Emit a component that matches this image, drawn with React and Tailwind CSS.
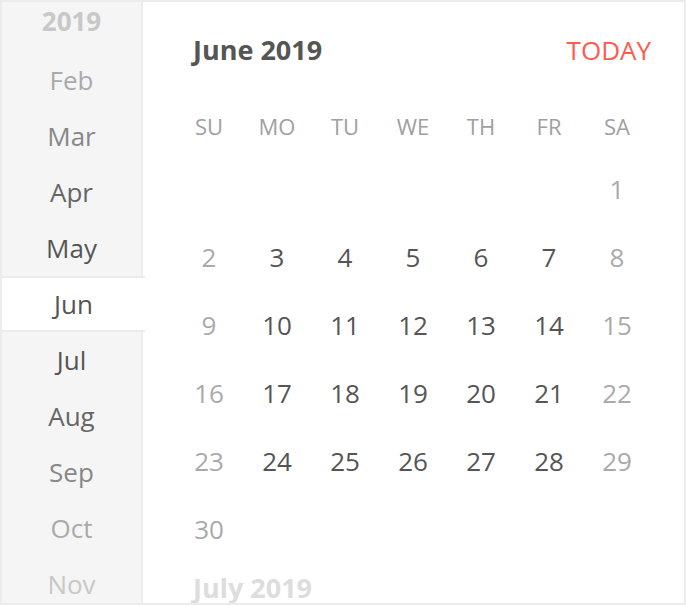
/* 월 선택 목록 + 월간 달력 (June 2019) */
const FONT = { fontFamily: '"Open Sans", "Noto Sans", sans-serif' };

const MONTHS = [
  { label: "Feb", color: "text-[#aaaaaa]" },
  { label: "Mar", color: "text-[#888888]" },
  { label: "Apr", color: "text-[#666666]" },
  { label: "May", color: "text-[#555555]" },
  { label: "Jun", color: "text-[#555555]", active: true },
  { label: "Jul", color: "text-[#555555]" },
  { label: "Aug", color: "text-[#666666]" },
  { label: "Sep", color: "text-[#888888]" },
  { label: "Oct", color: "text-[#aaaaaa]" },
  { label: "Nov", color: "text-[#c8c8c8]" },
];

const WEEKDAYS = ["SU", "MO", "TU", "WE", "TH", "FR", "SA"];

// 2019년 6월: 1일이 토요일
const CELLS = [
  ...Array(6).fill(null),
  ...Array.from({ length: 30 }, (_, i) => i + 1),
];

export default function App() {
  return (
    <div
      className="flex h-[605px] w-[686px] overflow-hidden border-2 border-[#ececec] bg-white"
      style={FONT}
    >
      {/* 월 목록 */}
      <div className="flex w-[141px] shrink-0 flex-col">
        <div className="flex h-[50px] shrink-0 items-start justify-center border-r-2 border-[#ececec] bg-[#f5f5f5] pt-[2px] text-[26px] font-bold leading-[34px] text-[#c8c8c8]">
          2019
        </div>
        {MONTHS.map((m) =>
          m.active ? (
            <div
              key={m.label}
              className={`-mr-[2px] flex h-[56px] shrink-0 items-center justify-center border-y-2 border-[#ececec] bg-white text-[26px] ${m.color}`}
            >
              {m.label}
            </div>
          ) : (
            <div
              key={m.label}
              className={`flex h-[56px] shrink-0 items-center justify-center border-r-2 border-[#ececec] bg-[#f5f5f5] text-[26px] ${m.color}`}
            >
              {m.label}
            </div>
          )
        )}
      </div>

      {/* 달력 */}
      <div className="flex-1 overflow-hidden pl-[32px] pr-[33px] pt-[30px]">
        <div className="flex h-[36px] items-center justify-between pl-[18px]">
          <span className="text-[27px] font-bold text-[#555555]">June 2019</span>
          <span className="text-[26px] text-[#ff5a4e]">TODAY</span>
        </div>

        <div className="mt-[38px] grid h-[40px] grid-cols-7">
          {WEEKDAYS.map((d) => (
            <div
              key={d}
              className="flex items-center justify-center text-[22px] text-[#a0a0a0]"
            >
              {d}
            </div>
          ))}
        </div>

        <div className="mt-[9px] grid grid-cols-7">
          {CELLS.map((n, i) => {
            const weekend = i % 7 === 0 || i % 7 === 6;
            return (
              <div
                key={i}
                className={`flex h-[68px] items-center justify-center text-[26px] ${
                  weekend ? "text-[#aaaaaa]" : "text-[#555555]"
                }`}
              >
                {n}
              </div>
            );
          })}
        </div>

        <div className="flex h-[36px] items-center pl-[18px] pt-[14px]">
          <span className="text-[27px] font-bold text-[#dddddd]">July 2019</span>
        </div>
      </div>
    </div>
  );
}
